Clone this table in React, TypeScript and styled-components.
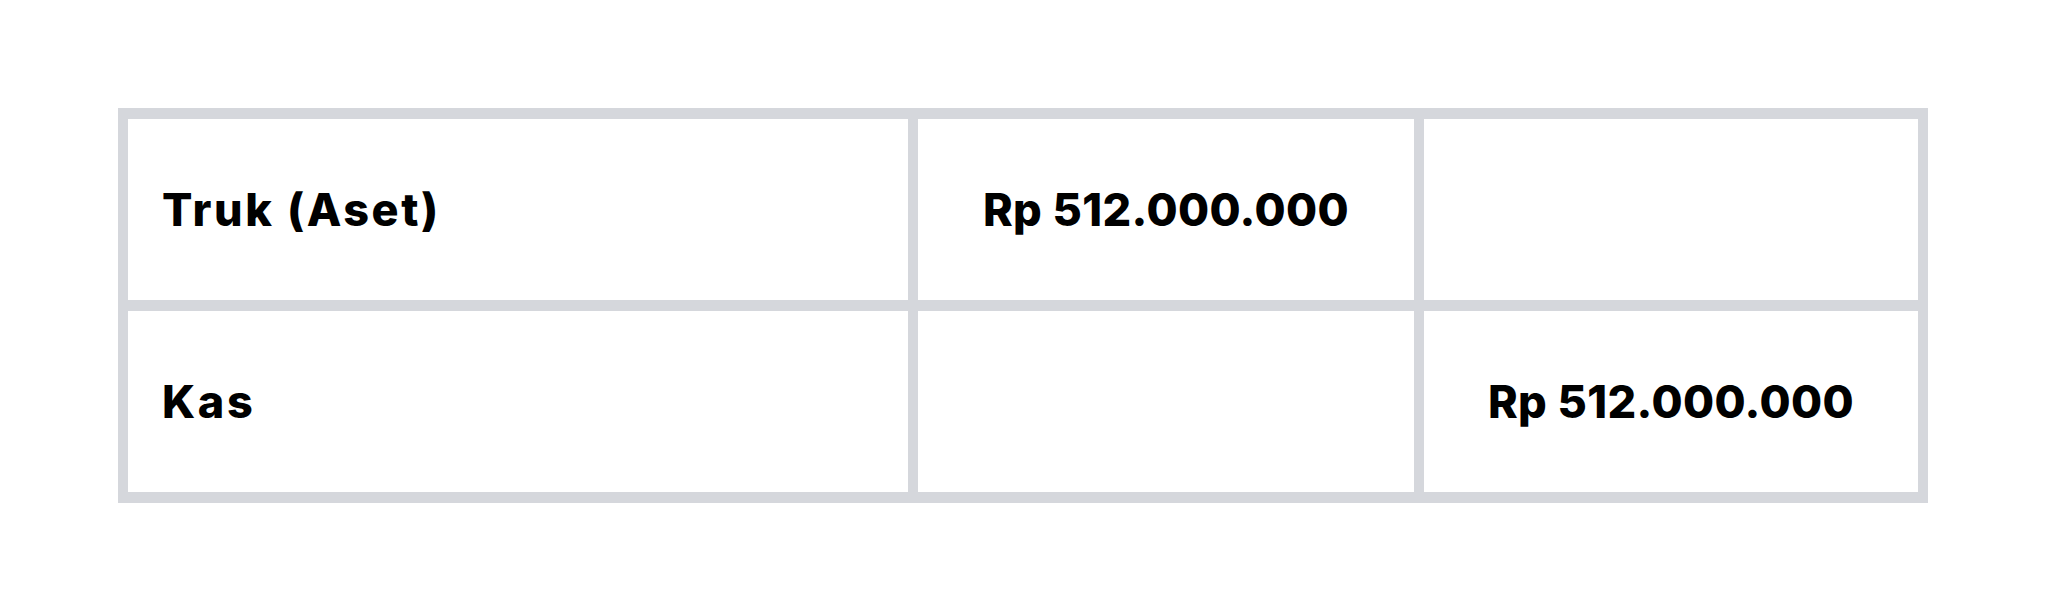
import styled, { createGlobalStyle } from 'styled-components';

interface CellProps {
  $align?: 'left' | 'center';
}

interface JournalRow {
  account: string;
  debit: string;
  credit: string;
}

const BORDER_COLOR = '#d5d7dc';

const rows: JournalRow[] = [
  { account: 'Truk (Aset)', debit: 'Rp 512.000.000', credit: '' },
  { account: 'Kas', debit: '', credit: 'Rp 512.000.000' },
];

export default function App() {
  return (
    <>
      <GlobalStyle />
      <Page>
        <Table>
          {rows.map(row => (
            <Row key={row.account}>
              <Cell $align="left">{row.account}</Cell>
              <Cell $align="center">{row.debit}</Cell>
              <Cell $align="center">{row.credit}</Cell>
            </Row>
          ))}
        </Table>
      </Page>
    </>
  );
}

const GlobalStyle = createGlobalStyle`
  html, body {
    margin: 0;
    padding: 0;
    background: #ffffff;
  }
  body {
    font-family: Inter, "Noto Sans", "Liberation Sans", sans-serif;
  }
`;

const Page = styled.div`
  width: 2048px;
  height: 614px;
  box-sizing: border-box;
  padding: 108px 0 0 118px;
  background: #ffffff;
`;

const Table = styled.div`
  display: grid;
  grid-template-columns: 780px 496px 494px;
  grid-auto-rows: 181px;
  gap: 11px 10px;
  width: 1810px;
  box-sizing: border-box;
  padding: 11px 10px;
  background: ${BORDER_COLOR};
`;

const Row = styled.div`
  display: contents;
`;

// nama akun sedikit lebih renggang dari angka
const Cell = styled.div<CellProps>`
  display: flex;
  align-items: center;
  justify-content: ${props => (props.$align === 'center' ? 'center' : 'flex-start')};
  padding: 0 ${props => (props.$align === 'center' ? '0' : '34px')};
  background: #ffffff;
  color: #000000;
  font-size: 45px;
  font-weight: 800;
  letter-spacing: ${props => (props.$align === 'center' ? '0.4px' : '2.6px')};
  white-space: nowrap;
`;
